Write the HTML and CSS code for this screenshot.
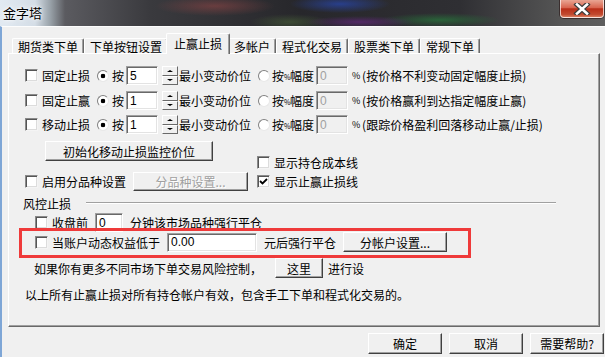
FILE: index.html
```html
<!DOCTYPE html>
<html lang="zh-CN">
<head>
    <meta charset="UTF-8">
    <meta name="viewport" content="width=device-width, initial-scale=1.0">
    <title>金字塔</title>
    <link rel="stylesheet" href="styles.css">
</head>
<body>
    <div class="window">
        <div class="titlebar">
            <span class="title">金字塔</span>
            <div class="close">
                <svg width="20" height="12" viewBox="0 0 20 12">
                    <path d="M5 1.5 L15 10.5 M15 1.5 L5 10.5" stroke="#3b3b3b" stroke-width="5" stroke-linecap="square"/>
                    <path d="M5 1.5 L15 10.5 M15 1.5 L5 10.5" stroke="#fff" stroke-width="2.6" stroke-linecap="square"/>
                </svg>
            </div>
        </div>

        <div class="main">
            <div class="tabs">
                <div class="tab">期货类下单</div>
                <div class="tab">下单按钮设置</div>
                <div class="tab active">止赢止损</div>
                <div class="tab">多帐户</div>
                <div class="tab">程式化交易</div>
                <div class="tab">股票类下单</div>
                <div class="tab">常规下单</div>
            </div>

            <div class="panel">
                <div class="row stop-row">
                    <span class="check"></span><span class="label">固定止损</span>
                    <span class="radio on"></span><span class="by">按</span>
                    <span class="field small">5</span>
                    <span class="spin"><span class="spin-btn"><i class="up"></i></span><span class="spin-btn"><i class="down"></i></span></span>
                    <span class="unit">最小变动价位</span>
                    <span class="radio"></span><span class="pct-label">按<span class="squeeze">%</span>幅度</span>
                    <span class="field small disabled">0</span>
                    <span class="pct">%</span>
                    <span class="note">(按价格不利变动固定幅度止损)</span>
                </div>
                <div class="row stop-row second">
                    <span class="check"></span><span class="label">固定止赢</span>
                    <span class="radio on"></span><span class="by">按</span>
                    <span class="field small">1</span>
                    <span class="spin"><span class="spin-btn"><i class="up"></i></span><span class="spin-btn"><i class="down"></i></span></span>
                    <span class="unit">最小变动价位</span>
                    <span class="radio"></span><span class="pct-label">按<span class="squeeze">%</span>幅度</span>
                    <span class="field small disabled">0</span>
                    <span class="pct">%</span>
                    <span class="note">(按价格赢利到达指定幅度止赢)</span>
                </div>
                <div class="row stop-row third">
                    <span class="check"></span><span class="label">移动止损</span>
                    <span class="radio on"></span><span class="by">按</span>
                    <span class="field small">1</span>
                    <span class="spin"><span class="spin-btn"><i class="up"></i></span><span class="spin-btn"><i class="down"></i></span></span>
                    <span class="unit">最小变动价位</span>
                    <span class="radio"></span><span class="pct-label">按<span class="squeeze">%</span>幅度</span>
                    <span class="field small disabled">0</span>
                    <span class="pct">%</span>
                    <span class="note">(跟踪价格盈利回落移动止赢/止损)</span>
                </div>

                <div class="row init-row">
                    <button class="btn init-btn">初始化移动止损监控价位</button>
                    <span class="check-item cost-line"><span class="check"></span><span class="label">显示持仓成本线</span></span>
                </div>

                <div class="row variety-row">
                    <span class="check"></span><span class="label">启用分品种设置</span>
                    <button class="btn variety-btn" disabled>分品种设置...</button>
                    <span class="check-item stop-line">
                        <span class="check checked"><svg width="9" height="9" viewBox="0 0 9 9"><path d="M1 4 L3.5 6.5 L8 2" fill="none" stroke="#000" stroke-width="1.8"/></svg></span>
                        <span class="label">显示止赢止损线</span>
                    </span>
                </div>

                <div class="row group-row">
                    <span class="group-title">风控止损</span>
                    <span class="group-line"></span>
                </div>

                <div class="row risk-row close-row">
                    <span class="check"></span><span class="label">收盘前</span>
                    <span class="field minutes">0</span>
                    <span class="after">分钟该市场品种强行平仓</span>
                </div>
                <div class="row risk-row equity-row">
                    <span class="check"></span><span class="label">当账户动态权益低于</span>
                    <span class="field equity">0.00</span>
                    <span class="after">元后强行平仓</span>
                    <button class="btn account-btn">分帐户设置...</button>
                </div>
                <div class="row more-row">
                    <span>如果你有更多不同市场下单交易风险控制，</span>
                    <button class="btn here-btn">这里</button>
                    <span class="after-here">进行设</span>
                </div>
                <div class="row footnote">
                    以上所有止赢止损对所有持仓帐户有效，包含手工下单和程式化交易的。
                </div>
            </div>

            <div class="actions">
                <button class="btn action">确定</button>
                <button class="btn action">取消</button>
                <button class="btn action">需要帮助?</button>
            </div>
        </div>

        <div class="highlight"></div>
    </div>
</body>
</html>
```

FILE: styles.css
```css
* {
    box-sizing: border-box;
}

body {
    margin: 0;
    font-family: "Noto Sans CJK SC", "Liberation Sans", sans-serif;
    font-size: 12px;
    color: #000;
    background-color: #f0f0f0;
}

.window {
    position: relative;
    width: 605px;
    height: 357px;
    overflow: hidden;
}

/* aero title bar */
.titlebar {
    display: flex;
    justify-content: space-between;
    align-items: flex-start;
    height: 26px;
    background:
        radial-gradient(ellipse 60px 10px at 215px 6px, rgba(150, 70, 70, 0.55), transparent),
        radial-gradient(ellipse 50px 9px at 340px 4px, rgba(40, 70, 170, 0.75), transparent),
        radial-gradient(ellipse 55px 6px at 360px 22px, rgba(110, 40, 140, 0.6), transparent),
        radial-gradient(ellipse 60px 7px at 440px 20px, rgba(40, 120, 60, 0.7), transparent),
        radial-gradient(ellipse 40px 8px at 290px 22px, rgba(80, 110, 60, 0.5), transparent),
        linear-gradient(90deg, #e2eaf2 0, #d4dde6 35px, #9aa3aa 50px, #5b5b60 65px, #3a3a3e 150px, #27272b 300px, #2f2f33 460px, #555 560px, #5e5e5e 605px);
}

.title {
    padding: 5px 0 0 3px;
    font-size: 13px;
    line-height: 16px;
    text-shadow: 0 0 6px #fff, 0 0 3px #fff;
}

.close {
    display: flex;
    justify-content: center;
    align-items: center;
    width: 44px;
    height: 18px;
    margin-right: 1px;
    border: 1px solid rgba(255, 255, 255, 0.7);
    border-top: none;
    border-radius: 0 0 4px 4px;
    background: linear-gradient(#e9a593 0, #d8654f 45%, #b92e18 52%, #c24a30 85%, #d97a5c 100%);
    box-shadow: 0 0 0 1px rgba(40, 20, 20, 0.6);
}

.main {
    height: 331px;
    border-top: 1px solid #fdfdfd;
    border-left: 2px solid #7ea6d6;
    background-color: #f0f0f0;
}

/* tabs */
.tabs {
    display: flex;
    align-items: flex-end;
    height: 26px;
    padding-left: 10px;
}

.tab {
    height: 15px;
    padding: 0 5px;
    line-height: 15px;
    background-color: #f0f0f0;
    border-top: 1px solid #fff;
    border-left: 1px solid #fff;
    border-right: 1px solid #696969;
    box-shadow: inset -1px 0 #a0a0a0;
    border-radius: 2px 2px 0 0;
}

.tab.active {
    position: relative;
    z-index: 1;
    height: 21px;
    margin: 0 -2px -1px;
    padding: 0 7px;
    line-height: 19px;
}

.panel {
    width: 592px;
    height: 274px;
    margin-left: 6px;
    padding: 12px 0 0 16px;
    border: 1px solid;
    border-color: #fff #696969 #696969 #fff;
    box-shadow: inset -1px -1px #a0a0a0;
}

/* rows */
.row {
    display: flex;
    align-items: center;
    height: 19px;
    white-space: nowrap;
}

.stop-row.second {
    margin-top: 6px;
}

.stop-row.third {
    margin-top: 5px;
}

.check {
    display: inline-flex;
    justify-content: center;
    align-items: center;
    flex: none;
    width: 13px;
    height: 13px;
    background-color: #fff;
    border: 1px solid;
    border-color: #8a8a8a #f4f4f4 #f4f4f4 #8a8a8a;
    box-shadow: inset 1px 1px #555, inset -1px -1px #dcdcdc;
}

.label {
    margin-left: 4px;
}

.radio {
    flex: none;
    width: 12px;
    height: 12px;
    margin-left: 7px;
    border-radius: 50%;
    border: 1px solid;
    border-color: #808080 #e8e8e8 #e8e8e8 #808080;
    background: #fff;
}

.radio.on {
    background: radial-gradient(circle, #000 0, #000 2px, #fff 2.6px);
}

.by {
    margin-left: 3px;
}

.field {
    display: inline-flex;
    align-items: center;
    height: 19px;
    padding-left: 3px;
    background-color: #fff;
    border: 1px solid;
    border-color: #a0a0a0 #fff #fff #a0a0a0;
    box-shadow: inset 1px 1px #696969, inset -1px -1px #e3e3e3;
    font-family: "Liberation Sans", sans-serif;
}

.field.small {
    width: 32px;
    margin-left: 2px;
}

.field.disabled {
    margin-left: 2px;
    color: #a0a0a0;
    background-color: #f0f0f0;
}

.spin {
    display: flex;
    flex-direction: column;
    width: 16px;
    height: 19px;
    margin-left: 4px;
}

.spin-btn {
    display: flex;
    justify-content: center;
    align-items: center;
    flex: 1;
    background-color: #f0f0f0;
    border: 1px solid;
    border-color: #fff #696969 #696969 #fff;
}

.spin-btn i {
    width: 0;
    height: 0;
    border-left: 3px solid transparent;
    border-right: 3px solid transparent;
}

.spin-btn .up {
    border-bottom: 2px solid #000;
}

.spin-btn .down {
    border-top: 2px solid #000;
}

.unit {
    margin-left: 1px;
}

.pct-label {
    margin-left: 2px;
}

.squeeze {
    display: inline-block;
    width: 6px;
    font-size: 7px;
    vertical-align: 1px;
}

.pct {
    display: inline-block;
    width: 7px;
    margin-left: 4px;
    font-size: 9px;
}

.note {
    margin-left: 3px;
}

/* buttons */
.btn {
    display: inline-flex;
    justify-content: center;
    align-items: center;
    height: 20px;
    padding: 0;
    font: inherit;
    color: #000;
    background-color: #f0f0f0;
    border: 1px solid;
    border-color: #fff #404040 #404040 #fff;
    box-shadow: inset -1px -1px #a0a0a0;
}

.btn:disabled {
    color: #a0a0a0;
    text-shadow: 1px 1px #fff;
}

.init-row {
    align-items: flex-start;
    height: 31px;
    margin-top: 7px;
}

.init-btn {
    width: 168px;
    margin-left: 20px;
}

.check-item {
    display: inline-flex;
    align-items: center;
}

.cost-line {
    margin: 13px 0 0 44px;
}

.variety-btn {
    width: 115px;
    height: 19px;
    margin-left: 7px;
}

.stop-line {
    margin-left: 9px;
}

.group-row {
    height: 14px;
    margin-top: 5px;
}

.group-title {
    margin-left: -2px;
}

.group-line {
    flex: 1;
    height: 2px;
    margin: 0 43px 0 15px;
    border-top: 1px solid #a0a0a0;
    border-bottom: 1px solid #fff;
}

.risk-row {
    padding-left: 10px;
}

.close-row {
    margin-top: 3px;
}

.equity-row {
    height: 20px;
}

.field.minutes {
    width: 28px;
    margin-left: 7px;
}

.field.equity {
    width: 90px;
    margin-left: 7px;
}

.after {
    margin-left: 7px;
}

.account-btn {
    width: 104px;
    margin-left: 7px;
}

.more-row {
    height: 20px;
    margin-top: 6px;
    padding-left: 9px;
}

.here-btn {
    width: 48px;
    margin-left: 13px;
}

.after-here {
    margin-left: 5px;
}

.footnote {
    height: 14px;
    margin-top: 9px;
}

.actions {
    display: flex;
    justify-content: flex-end;
    gap: 7px;
    margin-top: 6px;
    padding-right: 1px;
}

.btn.action {
    width: 74px;
    height: 21px;
}

/* red annotation box drawn over the dialog */
.highlight {
    position: absolute;
    left: 19px;
    top: 228px;
    width: 452px;
    height: 30px;
    border: 3px solid #ef3a3a;
}
```
